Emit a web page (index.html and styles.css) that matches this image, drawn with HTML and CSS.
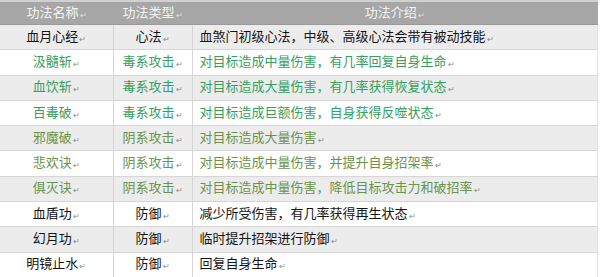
FILE: index.html
```html
<!DOCTYPE html>
<html lang="zh">
<head>
<meta charset="utf-8">
<link rel="stylesheet" href="styles.css">
</head>
<body>
<table class="skills">
  <thead>
    <tr>
      <th class="c-name">功法名称<span class="pm">↵</span></th>
      <th class="c-type">功法类型<span class="pm">↵</span></th>
      <th class="c-desc">功法介绍<span class="pm">↵</span></th>
    </tr>
  </thead>
  <tbody>
    <tr class="alt"><td class="c-name">血月心经<span class="pm">↵</span></td><td class="c-type">心法<span class="pm">↵</span></td><td class="c-desc">血煞门初级心法，中级、高级心法会带有被动技能<span class="pm">↵</span></td></tr>
    <tr class="poison"><td class="c-name">汲髓斩<span class="pm">↵</span></td><td class="c-type">毒系攻击<span class="pm">↵</span></td><td class="c-desc">对目标造成中量伤害，有几率回复自身生命<span class="pm">↵</span></td></tr>
    <tr class="alt poison"><td class="c-name">血饮斩<span class="pm">↵</span></td><td class="c-type">毒系攻击<span class="pm">↵</span></td><td class="c-desc">对目标造成大量伤害，有几率获得恢复状态<span class="pm">↵</span></td></tr>
    <tr class="poison"><td class="c-name">百毒破<span class="pm">↵</span></td><td class="c-type">毒系攻击<span class="pm">↵</span></td><td class="c-desc">对目标造成巨额伤害，自身获得反噬状态<span class="pm">↵</span></td></tr>
    <tr class="alt yin"><td class="c-name">邪魔破<span class="pm">↵</span></td><td class="c-type">阴系攻击<span class="pm">↵</span></td><td class="c-desc">对目标造成大量伤害<span class="pm">↵</span></td></tr>
    <tr class="yin"><td class="c-name">悲欢诀<span class="pm">↵</span></td><td class="c-type">阴系攻击<span class="pm">↵</span></td><td class="c-desc">对目标造成中量伤害，并提升自身招架率<span class="pm">↵</span></td></tr>
    <tr class="alt yin"><td class="c-name">俱灭诀<span class="pm">↵</span></td><td class="c-type">阴系攻击<span class="pm">↵</span></td><td class="c-desc">对目标造成中量伤害，降低目标攻击力和破招率<span class="pm">↵</span></td></tr>
    <tr><td class="c-name">血盾功<span class="pm">↵</span></td><td class="c-type">防御<span class="pm">↵</span></td><td class="c-desc">减少所受伤害，有几率获得再生状态<span class="pm">↵</span></td></tr>
    <tr class="alt"><td class="c-name">幻月功<span class="pm">↵</span></td><td class="c-type">防御<span class="pm">↵</span></td><td class="c-desc">临时提升招架进行防御<span class="pm">↵</span></td></tr>
    <tr><td class="c-name">明镜止水<span class="pm">↵</span></td><td class="c-type">防御<span class="pm">↵</span></td><td class="c-desc">回复自身生命<span class="pm">↵</span></td></tr>
  </tbody>
</table>
</body>
</html>
```
FILE: styles.css
```css
html, body {
  margin: 0;
  padding: 0;
  background: #ffffff;
}

body {
  font-family: "Noto Sans CJK SC", "Noto Sans", sans-serif;
  font-size: 13px;
  color: #141414;
}

.skills {
  width: 598px;
  border-collapse: collapse;
  table-layout: fixed;
}

.skills th,
.skills td {
  padding: 0;
  line-height: 16px;
  white-space: nowrap;
  overflow: hidden;
}

.skills thead tr {
  background: #a6a6a6;
  border-top: 2px solid #d0d0d0;
}

.skills th {
  height: 22px;
  color: #f4f4f4;
  font-weight: normal;
  text-align: center;
  border-bottom: 1px solid #9a9a9a;
}

.skills tbody tr {
  height: 25.3px;
  background: #ffffff;
}

.skills td {
  border-bottom: 1px solid #d6d6d6;
}

.skills .c-name {
  width: 113px;
  text-align: center;
  border-right: 1px solid #d6d6d6;
}

.skills .c-type {
  width: 79px;
  text-align: center;
  border-right: 1px solid #d6d6d6;
}

.skills th.c-name,
.skills th.c-type {
  border-right: none;
}

.skills td.c-desc {
  text-align: left;
  padding-left: 7px;
  border-right: 1px solid #e4e4e4;
}

.skills tbody tr.alt {
  background: #ececec;
}

.skills tr.poison td {
  color: #36a060;
}

.skills tr.yin td {
  color: #6a934c;
}

.pm {
  font-size: 8px;
  color: #8a8a8a;
  margin-left: 1px;
  vertical-align: -1px;
}

.skills th .pm {
  color: #e0e0e0;
}
```
